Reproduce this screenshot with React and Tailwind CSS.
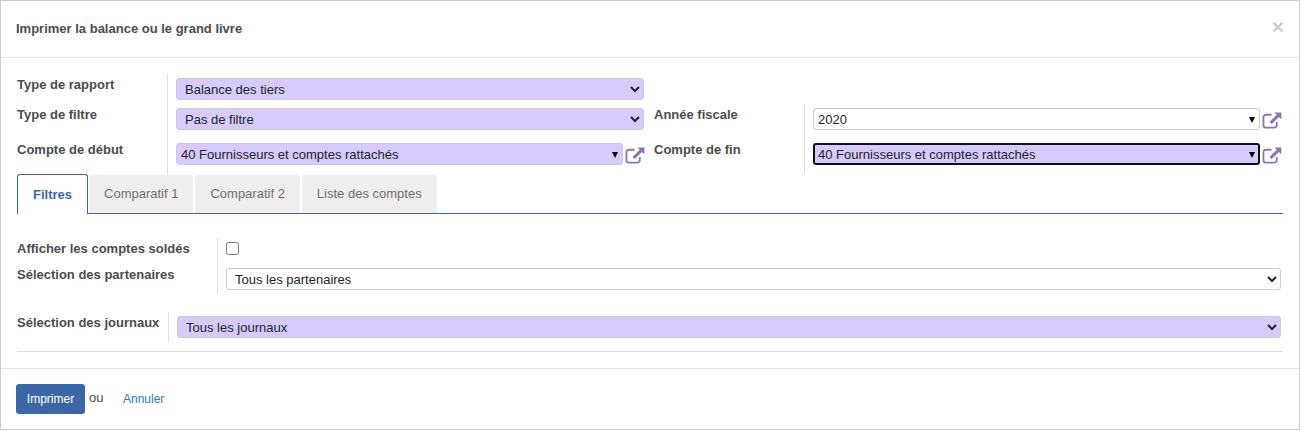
import React from "react";

const violet = "bg-[#d6caff]";

function ExtLink() {
  return (
    <svg width="20" height="18" viewBox="0 0 21 18" className="shrink-0 ml-[2px] mt-[1px]" fill="none">
      <path d="M10 3.500H4A2.500 2.500 0 0 0 1.500 6v8.500A2.500 2.500 0 0 0 4 17h9a2.500 2.500 0 0 0 2.500-2.500V11" stroke="#8b74b3" strokeWidth="1.900" />
      <path d="M13 1H20.300V8.300L17.800 5.800L10.200 13.200L8 11L15.500 3.500Z" fill="#8b74b3" />
    </svg>
  );
}

function Sel({ value, className = "" }) {
  return (
    <select
      defaultValue={value}
      className={`block h-[22px] border border-[#cccccc] rounded-[3px] text-[13px] leading-[20px] text-[#212529] pl-[4px] pr-0 outline-none min-w-0 w-full ${className}`}
    >
      <option>{value}</option>
    </select>
  );
}

function M2O({ value, className = "", focus = false }) {
  return (
    <div className="flex items-center w-full">
      <div
        className={`relative flex-1 h-[22px] rounded-[3px] flex items-center text-[13px] text-[#212529] ${
          focus ? "border-2 border-[#111111] pl-[3px]" : "border border-[#cccccc] pl-[4px]"
        } ${className}`}
      >
        <input
          readOnly
          value={value}
          className="w-full bg-transparent outline-none pt-[2px] text-[13px] text-[#212529] font-['Liberation_Sans',Arial,sans-serif]"
        />
        <span className={`absolute w-0 h-0 border-l-[3px] border-r-[3px] border-t-[6px] border-l-transparent border-r-transparent border-t-black ${focus ? "right-[3px] top-[7px]" : "right-[4px] top-[8px]"}`} />
      </div>
      <ExtLink />
    </div>
  );
}

function Label({ children, className = "" }) {
  return <div className={`font-bold text-[13px] leading-[20px] text-[#4c4c4c] ${className}`}>{children}</div>;
}

function Tab({ children, active, className = "" }) {
  return active ? (
    <div className={`h-[40px] px-[15px] bg-white border border-[#3c67a6] border-b-0 rounded-t-[3px] flex items-center font-bold text-[13px] text-[#3c67a6] z-10 ${className}`}>
      {children}
    </div>
  ) : (
    <div className={`h-[38px] px-[15px] mt-px bg-[#efeeec] rounded-t-[3px] flex items-center text-[13px] text-[#6f6f6f] ${className}`}>
      {children}
    </div>
  );
}

export default function App() {
  return (
    <div className="w-[1300px] h-[430px] bg-white border border-[#cccccc] font-['Liberation_Sans',Arial,sans-serif] flex flex-col">
      <header className="h-[57px] shrink-0 border-b border-[#e4e4e4] flex items-center justify-between pl-[15px] pr-[15px]">
        <h4 className="font-bold text-[13px] text-[#4c4c4c]">Imprimer la balance ou le grand livre</h4>
        <span className="font-bold text-[21px] leading-none text-[#cfcfcf] -mt-[6px]">×</span>
      </header>

      <main className="flex-1 flex flex-col pl-[16px] pr-[16px] pt-[16px]">
        <div className="grid grid-cols-[150px_487px_150px_479px] grid-rows-[30px_35px_35px]">
          <Label className="pt-[1px]">Type de rapport</Label>
          <div className="border-l border-[#dddddd] pl-[8px] pt-[4px] pr-[10px]">
            <Sel value="Balance des tiers" className={violet} />
          </div>
          <div />
          <div />

          <Label className="pt-[1px]">Type de filtre</Label>
          <div className="border-l border-[#dddddd] pl-[8px] pt-[4px] pr-[10px]">
            <Sel value="Pas de filtre" className={violet} />
          </div>
          <Label className="pt-[1px]">Année fiscale</Label>
          <div className="border-l border-[#dddddd] pl-[8px] pt-[4px] pr-[1px]">
            <M2O value="2020" className="bg-white" />
          </div>

          <Label className="pt-[1px]">Compte de début</Label>
          <div className="border-l border-[#dddddd] pl-[8px] pt-[4px] pr-[9px]">
            <M2O value="40 Fournisseurs et comptes rattachés" className={violet} />
          </div>
          <Label className="pt-[1px]">Compte de fin</Label>
          <div className="border-l border-[#dddddd] pl-[8px] pt-[4px] pr-[1px]">
            <M2O value="40 Fournisseurs et comptes rattachés" className={violet} focus />
          </div>
        </div>

        <nav className="flex items-start gap-[2px] h-[40px] border-b border-[#3c67a6] -mb-px">
          <Tab active className="-mr-px">Filtres</Tab>
          <Tab>Comparatif 1</Tab>
          <Tab>Comparatif 2</Tab>
          <Tab>Liste des comptes</Tab>
        </nav>

        <div className="grid grid-cols-[200px_1fr] grid-rows-[26px_30px] mt-[25px] pr-[2px]">
          <Label className="pt-[1px]">Afficher les comptes soldés</Label>
          <div className="border-l border-[#dddddd] pl-[8px] pt-[4px]">
            <input type="checkbox" className="block w-[13px] h-[13px] m-0" />
          </div>
          <Label className="pt-[1px]">Sélection des partenaires</Label>
          <div className="border-l border-[#dddddd] pl-[8px] pt-[4px]">
            <Sel value="Tous les partenaires" className="bg-white" />
          </div>
        </div>

        <div className="grid grid-cols-[151px_1fr] h-[30px] mt-[18px] pr-[2px]">
          <Label className="pt-[1px]">Sélection des journaux</Label>
          <div className="border-l border-[#dddddd] pl-[8px] pt-[4px]">
            <Sel value="Tous les journaux" className={violet} />
          </div>
        </div>

        <hr className="border-0 border-t border-[#dddddd] mt-[9px]" />
      </main>

      <footer className="h-[61px] shrink-0 border-t border-[#e4e4e4] flex items-start pl-[15px] pt-[15px]">
        <button className="h-[30px] w-[69px] bg-[#3c67a6] rounded-[3px] text-white text-[12px]">Imprimer</button>
        <span className="ml-[4px] mt-[4px] text-[13px] leading-[20px] text-[#4c4c4c]">ou</span>
        <a className="ml-[19.500px] mt-[6px] text-[12px] leading-[18px] text-[#2f78c4]">Annuler</a>
      </footer>
    </div>
  );
}
